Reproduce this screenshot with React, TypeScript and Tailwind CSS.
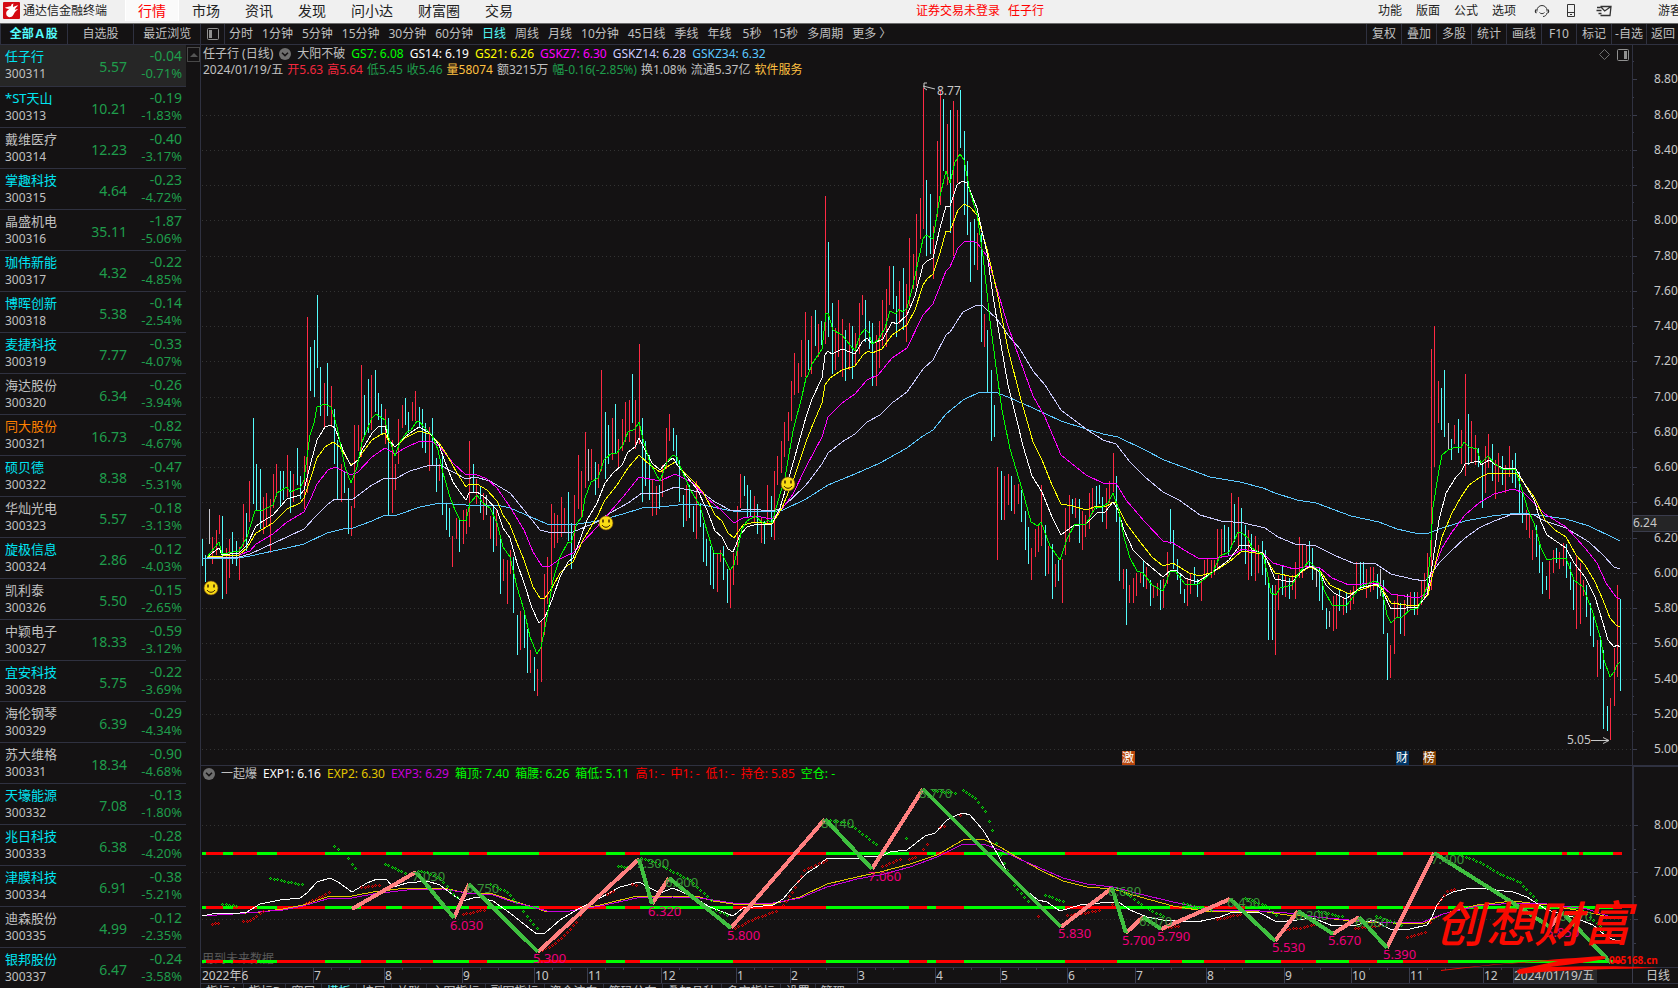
import React from 'react'
import { clsx } from 'clsx'

interface Stock {
  name: string
  code: string
  price: string
  change: string
  percent: string
  tone?: 'plain' | 'orange'
}

const stocks: Stock[] = [
  { name: '任子行', code: '300311', price: '5.57', change: '-0.04', percent: '-0.71%' },
  { name: '*ST天山', code: '300313', price: '10.21', change: '-0.19', percent: '-1.83%' },
  { name: '戴维医疗', code: '300314', price: '12.23', change: '-0.40', percent: '-3.17%', tone: 'plain' },
  { name: '掌趣科技', code: '300315', price: '4.64', change: '-0.23', percent: '-4.72%' },
  { name: '晶盛机电', code: '300316', price: '35.11', change: '-1.87', percent: '-5.06%', tone: 'plain' },
  { name: '珈伟新能', code: '300317', price: '4.32', change: '-0.22', percent: '-4.85%' },
  { name: '博晖创新', code: '300318', price: '5.38', change: '-0.14', percent: '-2.54%' },
  { name: '麦捷科技', code: '300319', price: '7.77', change: '-0.33', percent: '-4.07%' },
  { name: '海达股份', code: '300320', price: '6.34', change: '-0.26', percent: '-3.94%', tone: 'plain' },
  { name: '同大股份', code: '300321', price: '16.73', change: '-0.82', percent: '-4.67%', tone: 'orange' },
  { name: '硕贝德', code: '300322', price: '8.38', change: '-0.47', percent: '-5.31%' },
  { name: '华灿光电', code: '300323', price: '5.57', change: '-0.18', percent: '-3.13%', tone: 'plain' },
  { name: '旋极信息', code: '300324', price: '2.86', change: '-0.12', percent: '-4.03%' },
  { name: '凯利泰', code: '300326', price: '5.50', change: '-0.15', percent: '-2.65%', tone: 'plain' },
  { name: '中颖电子', code: '300327', price: '18.33', change: '-0.59', percent: '-3.12%', tone: 'plain' },
  { name: '宜安科技', code: '300328', price: '5.75', change: '-0.22', percent: '-3.69%' },
  { name: '海伦钢琴', code: '300329', price: '6.39', change: '-0.29', percent: '-4.34%', tone: 'plain' },
  { name: '苏大维格', code: '300331', price: '18.34', change: '-0.90', percent: '-4.68%', tone: 'plain' },
  { name: '天壕能源', code: '300332', price: '7.08', change: '-0.13', percent: '-1.80%' },
  { name: '兆日科技', code: '300333', price: '6.38', change: '-0.28', percent: '-4.20%' },
  { name: '津膜科技', code: '300334', price: '6.91', change: '-0.38', percent: '-5.21%' },
  { name: '迪森股份', code: '300335', price: '4.99', change: '-0.12', percent: '-2.35%', tone: 'plain' },
  { name: '银邦股份', code: '300337', price: '6.47', change: '-0.24', percent: '-3.58%' },
]

const menuItems = ['市场', '资讯', '发现', '问小达', '财富圈', '交易']
const systemItems = ['功能', '版面', '公式', '选项']
const periods = [
  '分时', '1分钟', '5分钟', '15分钟', '30分钟', '60分钟', '日线', '周线', '月线',
  '10分钟', '45日线', '季线', '年线', '5秒', '15秒', '多周期', '更多 〉',
]
const tools = ['复权', '叠加', '多股', '统计', '画线', 'F10', '标记', '-自选']
const bottomTabs = ['指标A', '指标B', '窗口', '模板', '扩展', '关联', '主图指标', '副图指标', '资金流向', '筹码分布', '叠加品种', '多空指标', '设置', '管理']

// One entry per bar: colour (c = down, r = up, w = flat), then high and low
const BARS = `
c539-566 c555-582 w509-544 r537-564 r530-555 r515-534 c516-599 r548-594 r539-578 c532-564
c541-566 r547-580 r504-547 c513-551 r481-522 c418-504 c464-511 c469-529 r497-534 r493-527
r499-553 r474-508 r464-497 c471-506 c471-500 r455-497 c471-513 r474-502 c448-485 c476-499
r456-509 r317-493 c347-391 c340-397 c295-368 c367-416 r383-428 c363-416 r386-427 c409-464
c440-499 r464-502 c472-493 c488-534 r506-536 r425-508 r425-451 r365-457 c395-435 c379-433
r375-430 c370-412 c393-420 c404-435 r409-444 c418-515 r440-513 r464-490 r419-464 r405-428
c398-425 c412-433 r402-421 r391-421 c407-427 c409-448 c423-453 r427-471 c418-465 c458-492
r464-481 c453-515 c504-530 c508-537 r536-567 r518-539 c520-552 r510-544 r509-534 r441-527
c464-493 r479-504 c486-513 r493-520 w495-515 r516-539 c506-552 r510-546 c537-594 r559-581
r560-604 r550-574 c557-613 c615-655 r611-650 c611-648 c629-673 r650-673 c657-691 r669-696
r620-682 r574-635 r557-604 r504-585 r513-548 r515-543 r497-537 r508-532 c492-541 c523-569
r495-550 r455-509 r471-518 r432-488 w449-481 r449-480 c462-495 r464-488 r370-471 c412-479
c425-464 r418-460 c404-454 r439-469 r419-451 r402-442 r400-442 c374-423 r400-449 r344-444
c418-502 c441-486 c455-500 r479-516 r486-515 c485-509 r465-497 r428-469 r414-441 c428-451
c435-465 c460-502 c495-527 r485-521 c485-518 c506-532 r481-539 c503-527 c523-562 c539-566
c546-585 c553-589 r554-592 r550-562 c546-580 c569-603 r569-608 r553-585 r506-565 r474-508
c476-496 c485-518 c490-517 r496-523 c504-534 r517-543 c521-544 r485-523 c496-537 r471-540
r456-485 r441-473 r422-457 r412-441 r381-421 r353-395 r363-393 r340-377 r312-377 c340-370
r316-374 c310-346 r324-357 c321-345 r196-344 c242-337 c303-374 r328-370 r300-357 r319-377
c330-381 r323-370 c326-379 r333-366 r303-354 r295-315 c300-342 c321-349 c323-386 r335-386
r321-368 r300-346 r289-347 r266-305 c266-309 c296-337 r281-324 c268-330 r284-342 r238-306
r254-289 r214-286 r198-239 r88-229 c180-256 c194-254 r226-279 r141-217 r90-205 c99-171
r124-185 c110-233 r101-256 r110-183 c90-148 c131-215 c161-235 c222-282 c219-265 r233-270
c233-342 r314-347 c330-392 c370-441 c405-437 r467-560 c471-520 r476-520 r474-505 c476-511
r485-514 r484-504 c490-522 c511-550 c527-564 r548-580 r529-557 r526-552 r485-546 c525-576
r546-574 c544-599 r564-587 c560-581 r559-603 r508-555 r495-542 c499-514 r498-518 c499-543
r511-550 r515-537 r493-529 r488-514 c486-509 c485-504 c497-522 r488-529 r481-503 r453-492
c476-522 c514-581 r569-589 c569-625 r585-603 r578-603 r573-596 r573-583 c560-587 r567-589
c580-606 r585-598 r583-596 c580-610 r579-608 r552-584 c509-544 c530-569 c559-580 c573-594
c589-603 r578-606 r573-594 c567-585 c579-597 r578-601 r560-579 r559-573 r560-578 r560-575
r529-568 r529-557 c525-552 c527-555 r493-545 c504-542 r497-550 c508-552 c525-564 r530-580
c534-576 r536-581 r545-573 c541-575 c550-585 c580-640 c585-640 r585-655 r575-610 c566-595
r575-597 c578-599 r575-590 r562-599 r537-578 r545-578 r545-568 c541-567 c548-580 w567-587
c567-601 c580-610 c608-629 w611-627 r596-631 r595-629 c589-611 r598-615 c593-613 r590-610
r586-604 r562-592 c562-590 c562-587 r569-598 r567-592 r567-590 c574-599 w569-596 c580-634
c633-680 r645-678 r601-654 r595-618 c603-634 r600-636 w594-612 r592-608 c592-615 r592-615
r580-605 r573-600 r553-592 r349-590 r326-467 r381-423 c388-430 c370-437 w423-450 c439-460
r425-444 c419-453 r430-464 r374-476 c414-465 r421-462 r435-465 c448-467 c463-508 r446-493
r434-468 c444-481 r460-499 r453-482 c456-485 r465-493 r446-477 c460-483 c453-488 c472-513
c493-523 r510-530 r513-538 r530-560 c525-557 c544-573 c562-594 c576-590 r561-599 r550-573
c548-563 r552-569 r543-566 c544-578 c562-590 c580-610 r555-629 r563-624 r580-596 c585-617
c603-636 c615-647 r640-677 c636-669 c650-729 c706-731 r698-740 r648-706 r585-677 c599-691
`
  .trim()
  .split(/\s+/)

const BAR_COLOR: Record<string, string> = { c: '#54fcfc', r: '#ff2a44', w: '#c8c8d0' }

// Moving averages, drawn from the slowest to the fastest
const averages = [
  {
    color: '#5cc8ff',
    points: '202,559 239,558 250,556 287,548 304,544 327,533 343,529 353,528 372,521 385,515 397,515 420,507 440,503 466,505 497,505 510,508 524,514 547,524 578,524 597,521 623,514 642,508 660,507 687,504 703,505 732,511 772,512 783,510 806,499 828,485 855,474 880,463 907,448 923,436 933,430 946,414 963,400 980,392 995,392 1008,397 1033,408 1061,421 1086,429 1103,434 1118,437 1145,450 1164,460 1210,477 1240,482 1263,488 1275,493 1297,500 1316,503 1351,516 1379,522 1397,529 1419,534 1429,533 1442,528 1465,521 1492,516 1519,513 1538,515 1566,519 1589,526 1614,538 1620,541',
  },
  {
    color: '#ccccff',
    points: '207,557 239,557 250,554 263,548 287,537 304,529 315,517 327,505 335,499 353,499 372,485 385,478 395,479 410,471 430,465 440,465 453,472 466,479 475,477 490,481 510,493 524,510 540,530 548,532 573,532 597,522 610,513 628,503 642,493 660,493 675,487 703,493 715,502 732,511 750,509 772,511 782,508 806,485 822,464 828,453 842,442 855,434 867,422 880,415 892,403 907,392 923,369 933,360 946,335 950,332 963,312 977,305 983,306 997,319 1008,335 1020,349 1033,371 1045,385 1061,410 1086,429 1103,440 1116,444 1130,462 1145,477 1163,492 1179,500 1200,515 1221,521 1244,523 1265,528 1278,537 1295,544 1316,546 1336,556 1353,563 1376,564 1391,574 1412,579 1425,581 1429,577 1439,563 1450,552 1465,538 1479,528 1494,521 1513,514 1532,514 1545,521 1566,528 1589,542 1603,555 1614,567 1620,569',
  },
  {
    color: '#ff00ff',
    points: '207,557 239,555 250,551 256,544 273,534 287,522 304,512 311,498 317,484 328,470 335,467 351,475 358,472 372,457 385,448 395,454 405,448 420,441 432,442 439,446 453,463 466,475 475,474 487,479 497,488 510,507 524,530 533,552 542,566 550,566 560,559 568,555 573,553 583,542 597,527 610,512 623,497 639,477 660,481 675,474 693,483 707,498 722,511 734,523 743,518 755,516 772,519 782,509 793,494 806,467 822,437 828,417 842,403 855,394 867,380 878,375 892,358 907,348 923,315 933,304 946,271 950,267 958,248 965,241 973,241 977,243 987,256 997,289 1008,326 1020,360 1033,396 1045,417 1061,455 1086,475 1103,483 1116,483 1126,500 1145,522 1163,541 1173,543 1189,553 1200,559 1217,558 1233,555 1242,549 1263,553 1273,563 1294,569 1309,566 1320,568 1332,578 1349,585 1376,583 1381,585 1391,594 1418,598 1428,593 1433,572 1442,548 1452,532 1465,515 1479,503 1494,494 1513,489 1524,493 1545,514 1566,527 1585,548 1597,563 1606,583 1616,597 1620,599',
  },
  {
    color: '#ffff00',
    points: '207,557 239,555 247,548 256,533 273,523 287,509 300,503 304,498 311,477 317,458 325,447 333,442 340,447 351,465 358,460 362,453 372,440 380,435 385,433 389,442 395,447 405,438 419,431 430,434 439,443 447,455 457,473 466,487 469,484 477,484 487,490 497,501 503,515 510,525 517,543 524,560 533,587 540,598 545,598 552,588 560,573 568,565 573,562 583,540 597,517 605,500 617,485 628,468 639,455 650,465 660,472 667,467 675,462 679,467 693,481 703,492 715,515 722,521 728,533 734,538 743,525 755,522 772,524 782,508 793,481 806,442 813,424 822,403 825,385 830,378 842,370 855,366 863,355 868,351 872,353 882,349 892,335 907,325 915,310 923,285 927,279 933,274 940,253 946,231 950,231 958,210 964,204 970,207 977,215 987,249 997,292 1008,349 1020,396 1033,442 1042,460 1052,485 1061,504 1073,506 1086,510 1097,506 1107,506 1113,502 1116,503 1126,523 1137,538 1152,557 1163,566 1173,563 1189,573 1200,576 1213,572 1229,562 1242,551 1263,554 1275,573 1294,577 1309,567 1320,571 1330,585 1349,594 1374,585 1381,587 1391,603 1406,605 1418,605 1428,595 1433,573 1442,537 1452,513 1461,497 1469,485 1479,478 1489,473 1503,474 1516,473 1524,483 1534,497 1545,520 1555,530 1566,537 1576,555 1585,565 1595,582 1603,600 1610,618 1616,625 1620,627',
  },
  {
    color: '#ffffff',
    points: '207,557 219,548 222,555 239,553 247,545 256,526 263,521 273,515 287,499 300,495 304,490 311,462 317,440 325,427 331,425 335,428 343,450 351,466 358,460 362,450 372,433 379,426 385,426 389,440 395,447 405,437 413,431 419,427 430,433 439,445 445,462 453,482 462,495 466,500 469,493 477,492 487,499 497,510 503,528 510,538 517,563 524,583 532,608 539,623 545,617 552,600 560,577 568,562 573,558 580,540 587,520 597,503 605,483 613,473 622,465 628,452 635,447 639,438 645,450 652,463 660,470 667,462 673,458 678,466 697,489 707,510 715,531 722,537 728,549 733,552 740,535 747,527 757,524 772,524 780,508 788,481 797,449 806,417 812,399 822,378 825,355 828,351 832,354 842,349 855,354 862,342 867,338 872,344 883,339 892,322 897,324 907,315 915,296 923,265 927,261 933,258 940,228 946,206 950,206 957,185 962,181 967,183 977,208 987,253 993,296 1000,339 1008,385 1017,421 1023,446 1032,476 1042,492 1052,517 1061,535 1073,526 1086,524 1097,513 1105,512 1113,502 1118,510 1124,530 1133,550 1145,562 1163,577 1171,570 1177,571 1185,578 1197,582 1213,572 1229,560 1240,545 1249,545 1252,550 1263,553 1267,560 1275,579 1292,582 1303,570 1311,566 1320,572 1326,585 1334,593 1346,599 1360,588 1377,584 1383,592 1391,609 1406,608 1418,607 1427,595 1433,560 1439,520 1446,493 1456,477 1461,472 1465,464 1479,461 1481,465 1489,460 1496,465 1503,468 1516,469 1524,483 1534,500 1541,522 1547,535 1566,548 1574,563 1585,577 1595,597 1603,623 1608,640 1614,647 1617,645 1620,647',
  },
  {
    color: '#00ff00',
    points: '207,557 219,542 222,554 239,551 247,537 255,511 263,510 273,505 277,493 287,487 290,492 300,488 304,480 310,435 314,423 317,407 325,404 331,407 337,427 345,467 351,483 357,467 362,442 372,418 376,414 385,420 389,438 395,456 400,442 407,432 411,430 417,421 419,421 424,427 432,435 438,450 443,473 450,497 455,510 460,520 466,521 470,503 477,495 483,503 490,508 497,523 503,547 510,557 517,587 524,610 530,637 537,654 541,647 547,617 553,580 560,557 568,542 571,543 577,523 582,517 585,498 591,482 598,478 604,460 612,453 617,453 623,445 628,432 635,429 639,422 644,443 650,463 660,481 667,462 673,455 677,457 679,464 690,489 700,506 707,531 714,553 722,554 730,570 734,565 742,529 747,521 755,516 764,524 768,520 772,523 778,501 785,478 793,431 802,396 806,378 808,375 812,364 822,349 826,313 828,313 833,330 842,335 855,351 860,335 865,329 869,333 872,344 878,340 885,328 890,311 896,314 899,309 903,312 907,308 913,285 923,239 926,235 933,239 940,196 946,171 950,183 955,162 960,154 964,160 970,192 977,214 983,256 990,321 997,374 1002,410 1010,449 1022,489 1031,522 1038,526 1041,522 1050,546 1060,560 1067,539 1075,524 1086,524 1095,508 1102,507 1108,503 1113,493 1118,507 1124,537 1130,558 1137,571 1143,573 1152,585 1163,591 1170,572 1175,571 1185,584 1197,585 1213,572 1220,556 1229,552 1238,532 1242,533 1248,538 1252,548 1263,555 1267,572 1271,593 1276,595 1280,588 1292,585 1299,573 1309,561 1315,567 1320,572 1324,590 1332,605 1347,605 1360,587 1374,581 1379,583 1384,600 1387,615 1391,623 1397,617 1402,617 1410,610 1418,608 1423,597 1427,587 1430,557 1433,507 1439,470 1442,455 1448,450 1456,447 1461,448 1464,442 1469,447 1477,449 1481,463 1488,456 1494,463 1503,470 1515,469 1522,490 1528,510 1534,523 1541,548 1547,560 1557,558 1566,558 1574,580 1583,587 1593,613 1601,640 1604,660 1610,677 1614,672 1617,665 1620,662',
  },
]

const exps = [
  {
    color: '#e0c400',
    points: '202,916 233,914 260,912 283,909 303,905 327,897 352,896 373,892 407,888 443,888 467,893 493,894 513,901 533,907 547,912 570,911 600,905 637,896 673,896 700,897 713,901 733,904 773,904 800,897 827,884 857,877 880,872 910,864 937,855 963,840 983,839 1000,847 1017,857 1040,870 1063,881 1087,887 1113,889 1140,897 1173,906 1210,912 1260,911 1287,915 1317,917 1360,922 1393,923 1423,924 1443,914 1477,905 1513,901 1547,905 1587,912 1617,919',
  },
  {
    color: '#c800dc',
    points: '202,916 233,914 283,910 303,906 327,899 352,898 373,894 407,890 443,889 467,893 493,895 513,902 533,907 547,911 570,911 600,906 637,898 673,897 700,898 733,903 773,903 800,898 827,887 857,879 880,875 910,867 937,857 963,844 983,844 1000,850 1017,858 1040,868 1063,878 1087,884 1113,887 1140,894 1173,902 1210,910 1260,911 1287,913 1317,917 1360,921 1393,923 1423,922 1443,914 1477,906 1513,903 1547,904 1587,909 1617,919',
  },
  {
    color: '#ffffff',
    points: '202,916 217,913 233,914 247,912 260,904 280,900 300,898 307,893 317,882 330,878 338,882 352,892 367,883 377,879 387,880 393,887 407,883 427,881 440,885 453,895 462,901 477,897 493,901 510,913 525,925 537,934 545,933 560,920 580,908 600,898 620,887 639,882 650,888 660,893 673,888 693,897 710,907 723,912 733,916 743,908 773,905 783,899 793,887 807,873 818,866 827,858 857,859 867,856 880,857 890,852 907,850 925,836 935,833 947,820 957,815 963,813 970,815 983,830 997,853 1007,872 1023,888 1038,900 1047,902 1060,911 1080,905 1110,902 1120,903 1130,910 1147,917 1163,920 1197,922 1220,917 1233,912 1260,913 1277,922 1297,920 1313,918 1333,926 1357,925 1373,920 1390,929 1410,929 1427,925 1432,917 1437,905 1443,897 1453,892 1470,888 1487,889 1513,892 1527,897 1547,910 1573,917 1593,925 1607,937 1615,940 1621,941',
  },
]

// Box lines switch between green and red at these x positions, starting green
const boxStops = [
  202, 206, 223, 233, 257, 277, 325, 361, 386, 402, 433, 469, 487, 539, 606, 625, 640, 733, 826, 909, 927, 936, 964,
  1065, 1117, 1170, 1182, 1204, 1245, 1281, 1316, 1349, 1377, 1403, 1448, 1562, 1567, 1579, 1583, 1613, 1622,
]

const rises = [
  '352,909 416,872', '454,918 469,884', '538,952 639,859', '652,904 669,878', '731,928 825,819', '872,869 923,789',
  '1061,927 1112,888', '1126,933 1143,917', '1161,929 1230,899', '1275,941 1298,911', '1333,934 1359,917',
  '1387,948 1434,853', '1550,927 1562,912',
]
const falls = [
  '416,872 454,918', '469,884 538,952', '639,859 652,904', '669,878 731,928', '825,819 872,869', '923,789 1061,927',
  '1112,888 1126,933', '1143,917 1161,929', '1230,899 1275,941', '1298,911 1333,934', '1359,917 1387,948',
  '1434,853 1513,903 1550,927', '1562,912 1611,963',
]

const greenDots = [
  '222,904 240,906', '270,878 305,885', '334,846 342,852', '348,858 352,864 358,872', '385,864 408,874',
  '418,871 427,872 440,878 450,890 460,901', '490,884 507,892 516,902 530,920 540,932', '618,866 630,867',
  '641,858 655,862 670,870 690,880 714,903', '716,910 731,916', '830,820 848,823 880,847', '906,838 907,838',
  '933,790 948,792 958,793', '963,790 975,798 985,811 992,830 1000,855 1014,885 1031,905', '1045,895 1066,902',
  '1117,888 1130,896 1145,907 1167,918', '1183,903 1215,911', '1245,898 1265,905 1279,918', '1318,911 1345,917',
  '1376,916 1404,926', '1455,853 1480,862 1500,874 1520,882 1539,903', '1583,911 1600,926 1610,938',
]
const redDots = [
  '212,924 221,922', '243,921 250,920 266,909', '306,903 322,896 332,890', '361,887 382,884', '463,914 487,909',
  '542,950 555,943 567,932 576,922 584,908', '607,894 616,889', '632,884 640,886', '735,928 755,918 779,910',
  '783,905 792,892 804,870 815,865 830,858', '882,866 903,857', '909,859 918,856', '923,849 931,839',
  '940,827 948,824', '960,815 961,815', '1038,916 1042,914', '1067,915 1085,913 1102,909', '1112,904 1113,904',
  '1165,928 1181,925', '1217,919 1243,913', '1282,929 1300,928 1318,923', '1355,928 1382,925', '1407,937 1428,931',
  '1430,922 1435,919', '1438,903 1447,891 1458,888',
]

const peaks: [number, number, string][] = [
  [413, 877, '7.030'], [467, 889, '6.750'], [637, 864, '7.300'], [666, 883, '6.900'], [822, 824, '8.140'],
  [920, 794, '8.770'], [1109, 892, '6.680'], [1140, 922, '6.070'], [1228, 903, '6.450'], [1296, 916, '6.200'],
  [1356, 923, '6.060'], [1432, 860, '7.400'], [1560, 917, '6.170'],
]
const troughs: [number, number, string][] = [
  [451, 926, '6.030'], [534, 959, '5.300'], [649, 912, '6.320'], [728, 936, '5.800'], [869, 877, '7.060'],
  [1059, 934, '5.830'], [1123, 941, '5.700'], [1158, 937, '5.790'], [1273, 948, '5.530'], [1329, 941, '5.670'],
  [1384, 955, '5.390'], [1547, 933, '5.850'],
]

const months: [number, string][] = [
  [313, '7'], [384, '8'], [462, '9'], [534, '10'], [587, '11'], [661, '12'], [736, '1'], [790, '2'], [857, '3'],
  [935, '4'], [1000, '5'], [1067, '6'], [1135, '7'], [1206, '8'], [1284, '9'], [1351, '10'], [1409, '11'], [1483, '12'],
]

const AXIS_X = 1632
const priceY = (price: number) => Math.round(749 - (price - 5) * 176.2)
const expY = (price: number) => Math.round(825 + (8 - price) * 47)

// Walks each polyline and drops a small ring roughly every bar
function ringsAlong(points: string) {
  const pts = points.split(' ').map((p) => p.split(',').map(Number))
  const rings: [number, number][] = []
  for (let i = 0; i < pts.length - 1; i++) {
    const [x0, y0] = pts[i]
    const [x1, y1] = pts[i + 1]
    const steps = Math.max(1, Math.round((x1 - x0) / 3.4))
    for (let s = 0; s < steps; s++) {
      rings.push([Math.round(x0 + ((x1 - x0) * s) / steps), Math.round(y0 + ((y1 - y0) * s) / steps)])
    }
  }
  return rings
}

function Logo() {
  return (
    <svg viewBox="0 0 17 17" className="h-[17px] w-[17px]" aria-hidden="true">
      <rect width="17" height="17" rx="1" fill="#d40a12" />
      <path d="M10.5 1.5c-1.8.5-2.8 1.300-2.300 2.500L2 5.500C3.500 7 5.500 7 6.500 6.800 4.500 8.500 2.800 9.500 3.200 12c.4 2.600 2.600 3.500 4.600 3 2-.5 2.500-2.400 3.700-4.300.9-1.500 2.500-2.700 3.500-3.200-1.200-.3-2.300-.2-3.200.5.3-1.500 1.700-3.300 3.500-4.500-2 0-3.700.6-5 1.700-.3-1.300-.4-2.300.2-3.700z" fill="#fff" />
    </svg>
  )
}

function ChevronDot() {
  return (
    <svg viewBox="0 0 12 12" className="h-3 w-3 shrink-0" aria-hidden="true">
      <circle cx="6" cy="6" r="6" fill="#6e6e6e" />
      <path d="M3 4.800 6 7.600 9 4.800" fill="none" stroke="#141213" strokeWidth="1.500" />
    </svg>
  )
}

function HeadsetIcon() {
  return (
    <svg viewBox="0 0 16 14" className="h-3.5 w-4" fill="none" stroke="#333" aria-hidden="true">
      <path d="M3 7.500V6.500a5 5 0 0 1 10 0v1" />
      <path d="M2.500 5.500C1 6 1 8.500 2.500 9M13.500 5.500C15 6 15 8.500 13.500 9" strokeWidth="1.300" />
      <path d="M5.500 8.500c1.300 1.600 3.700 1.600 5 0M13 9c-.5 2.300-2 3.500-4 3.500" />
    </svg>
  )
}

function PhoneIcon() {
  return (
    <svg viewBox="0 0 10 14" className="h-3.5 w-2.5" fill="none" stroke="#333" aria-hidden="true">
      <path d="M1.500.5h7v12h-7zM1.500 8.500h7M4 10.500h2" />
    </svg>
  )
}

function MailIcon() {
  return (
    <svg viewBox="0 0 16 12" className="h-3 w-4" fill="none" stroke="#333" aria-hidden="true">
      <path d="M4.500 1.500h10.500l-1 9H4.500M4.500 1.500l4.200 4.500L15 1.500M1 2.500h3.500M.5 5.500h5M2.500 8.500h3" strokeWidth="1.300" />
    </svg>
  )
}

function Smiley({ cx, cy }: { cx: number; cy: number }) {
  return (
    <g>
      <circle cx={cx} cy={cy} r="7" fill="#fadc14" stroke="#7a4a10" strokeWidth="0.6" />
      <path d={`M${cx - 3} ${cy - 3.5}v3M${cx + 3} ${cy - 3.5}v3`} stroke="#3a1e00" strokeWidth="1.500" />
      <path d={`M${cx - 4} ${cy + 2}c2 3 6 3 8 0`} fill="none" stroke="#3a1e00" />
    </g>
  )
}

function TopBar() {
  return (
    <header className="flex h-6 shrink-0 items-center overflow-hidden whitespace-nowrap border-b border-[#6b6b6b] bg-[#f0f0f0] pb-0.5 text-[#222]">
      <div className="flex w-[125px] shrink-0 items-center gap-[3px] pl-[3px] text-xs">
        <Logo />
        <span>通达信金融终端</span>
      </div>
      <nav className="flex h-full items-center gap-[25px] text-sm">
        <button type="button" className="-mr-3 h-full border-x border-white bg-[#fafafa] px-3 text-[#ff0000]">行情</button>
        {menuItems.map((item) => (
          <button key={item} type="button">{item}</button>
        ))}
      </nav>
      <div className="mr-[334px] ml-auto flex gap-2 text-xs text-[#ff0000]">
        <span>证券交易未登录</span>
        <span>任子行</span>
      </div>
      <div className="-mr-1 flex items-center text-xs">
        <div className="flex gap-3.5">
          {systemItems.map((item) => (
            <button key={item} type="button">{item}</button>
          ))}
        </div>
        <button type="button" aria-label="客服" className="ml-[18px]"><HeadsetIcon /></button>
        <button type="button" aria-label="手机" className="ml-4"><PhoneIcon /></button>
        <button type="button" aria-label="邮件" className="ml-5"><MailIcon /></button>
        <button type="button" className="ml-[46px]">游客</button>
      </div>
    </header>
  )
}

function Sidebar() {
  return (
    <aside className="flex w-[201px] shrink-0 flex-col border-r border-[#2f3140]">
      <div className="flex h-[21px] shrink-0 divide-x divide-[#2f3140] border-b border-l border-[#2f3140] text-xs">
        <button type="button" className="flex-1 font-bold text-[#54fcfc]">全部Ａ股</button>
        <button type="button" className="flex-1">自选股</button>
        <button type="button" className="flex-1">最近浏览</button>
      </div>
      <div className="flex">
        <table className="w-[186px] border-collapse">
          <tbody>
            {stocks.map((stock, index) => (
              <tr
                key={stock.code}
                className={clsx('h-[41px] border-b border-[#2f3140]', index === 0 && 'bg-[#262626]')}
              >
                <td className="pt-0.5 pl-[5px] align-top">
                  <div
                    className={clsx(
                      'text-[13px] leading-[18px]',
                      !stock.tone && 'text-[#00e4f2]',
                      stock.tone === 'orange' && 'text-[#ff8000]'
                    )}
                  >
                    {stock.name}
                  </div>
                  <div className="text-xs leading-[17px]">{stock.code}</div>
                </td>
                <td className="pt-1 pr-[3px] text-right text-sm text-[#1f9d4c]">{stock.price}</td>
                <td className="w-[56px] pt-0.5 pr-1 text-right align-top text-[#1f9d4c]">
                  <div className="text-sm leading-[18px]">{stock.change}</div>
                  <div className="text-[13px] leading-[17px]">{stock.percent}</div>
                </td>
              </tr>
            ))}
          </tbody>
        </table>
        <div className="flex-1 pt-0.5 pl-px">
          <button
            type="button"
            aria-label="向上"
            className="flex h-[15px] w-full items-center justify-center border border-[#484848]"
          >
            <svg viewBox="0 0 8 4" className="h-1 w-2"><path d="M4 0 8 4H0z" fill="#555" /></svg>
          </button>
        </div>
      </div>
    </aside>
  )
}

function Toolbar() {
  return (
    <div className="flex h-[21px] shrink-0 items-center overflow-hidden whitespace-nowrap border-b border-[#2f3140] text-xs">
      <button type="button" aria-label="侧栏" className="flex h-full w-6 shrink-0 items-center justify-center border-r border-[#2f3140]">
        <svg viewBox="0 0 12 12" className="h-3 w-3">
          <rect x="0.5" y="0.5" width="11" height="11" rx="1" fill="none" stroke="#909090" />
          <rect x="2" y="2" width="3" height="8" fill="#909090" />
        </svg>
      </button>
      <div className="flex gap-[9px] pl-1">
        {periods.map((period) => (
          <button
            key={period}
            type="button"
            className={clsx(period === '日线' && 'text-[#54fcfc]', period === '5秒' && 'px-0.5')}
          >
            {period}
          </button>
        ))}
      </div>
      <div className="ml-auto flex h-full divide-x divide-[#2f3140] border-l border-[#2f3140]">
        {tools.map((tool) => (
          <button key={tool} type="button" className="w-[35px]">{tool}</button>
        ))}
        <button type="button" className="w-[31px] pl-1 text-left">返回</button>
      </div>
    </div>
  )
}

function MainLegend() {
  return (
    <div className="absolute top-px left-0 pl-0.5 text-xs leading-4 whitespace-nowrap">
      <div className="flex items-center gap-1.5">
        <span>任子行 (日线)</span>
        <ChevronDot />
        <span>大阳不破</span>
        <span className="text-[#00ff00]">GS7: 6.08</span>
        <span className="text-white">GS14: 6.19</span>
        <span className="text-[#ffff00]">GS21: 6.26</span>
        <span className="text-[#ff00ff]">GSKZ7: 6.30</span>
        <span className="text-[#ccccff]">GSKZ14: 6.28</span>
        <span className="text-[#5cc8ff]">GSKZ34: 6.32</span>
      </div>
      <div className="flex gap-1">
        <span>2024/01/19/五</span>
        <span className="text-[#f5283f]">开5.63</span>
        <span className="text-[#f5283f]">高5.64</span>
        <span className="text-[#1f9d4c]">低5.45</span>
        <span className="text-[#1f9d4c]">收5.46</span>
        <span className="text-[#ffc040]">量58074</span>
        <span>额3215万</span>
        <span className="text-[#1f9d4c]">幅-0.16(-2.85%)</span>
        <span>换1.08%</span>
        <span>流通5.37亿</span>
        <span className="text-[#ffc040]">软件服务</span>
      </div>
    </div>
  )
}

function MainChart() {
  const labels = Array.from({ length: 20 }, (_, i) => 8.8 - i * 0.2)
  return (
    <section className="relative">
      <svg viewBox="201 45 1477 720" className="block w-full text-xs" fill="none">
        <g shapeRendering="crispEdges">
          {labels.slice(1).map((price) => (
            <path key={price} d={`M202 ${priceY(price) + 0.5}H${AXIS_X}`} stroke="#333333" strokeDasharray="1 3" />
          ))}
          {labels.map((price) => (
            <path key={price} d={`M${AXIS_X} ${priceY(price) + 0.5}h5M${AXIS_X} ${priceY(price) - 17.5}h2`} stroke="#3a3c4c" />
          ))}
          <path d={`M${AXIS_X + 0.5} 45V765`} stroke="#2f3140" />
          {BARS.map((bar, i) => {
            const [high, low] = bar.slice(1).split('-')
            const x = 202.5 + Math.round(i * 3.385)
            return <path key={i} d={`M${x} ${high}V${low}`} stroke={BAR_COLOR[bar[0]]} />
          })}
          {averages.map((line) => (
            <polyline key={line.color} points={line.points} stroke={line.color} />
          ))}
        </g>
        {labels.map((price) => (
          <text key={price} x="1654" y={priceY(price) + 4} fill="#c8c8c8">{price.toFixed(2)}</text>
        ))}
        <rect x="1632.5" y="515.500" width="48" height="16" fill="#252526" stroke="#3a3c4c" />
        <text x="1633" y="527" fill="#c8c8c8">6.24</text>

        <path d="M935 89 923 86m4-3h-3v5l3 2" stroke="#c8c8c8" />
        <text x="937" y="95" fill="#c8c8c8">8.77</text>
        <path d="M1591 740.500h18m-6-3 6 3-6 3" stroke="#c8c8c8" />
        <text x="1567" y="744" fill="#c8c8c8">5.05</text>

        <Smiley cx={211} cy={588} />
        <Smiley cx={606} cy={523} />
        <Smiley cx={788} cy={484} />

        <rect x="1122" y="751" width="13" height="14" fill="#b8460c" />
        <text x="1122" y="762" fill="#fff">激</text>
        <rect x="1396" y="751" width="13" height="14" fill="#003464" />
        <text x="1396" y="762" fill="#fff">财</text>
        <rect x="1423" y="751" width="13" height="14" fill="#7c3c00" />
        <text x="1423" y="762" fill="#fff">榜</text>

        <path d="M1604.500 49.500 1609.500 54.500 1604.500 59.500 1599.500 54.500z" stroke="#707070" />
        <rect x="1617.500" y="49.500" width="11" height="11" rx="1" stroke="#909090" />
        <rect x="1624" y="51" width="3" height="8" fill="#909090" />
      </svg>
      <MainLegend />
    </section>
  )
}

function Rings({ runs, color }: { runs: string[]; color: string }) {
  return (
    <g fill={color} shapeRendering="crispEdges">
      {runs.flatMap(ringsAlong).map(([x, y], i) => (
        <path key={i} d={`M${x} ${y - 1}h1v1h-1zM${x - 1} ${y}h1v1h-1zM${x + 1} ${y}h1v1h-1zM${x} ${y + 1}h1v1h-1z`} />
      ))}
    </g>
  )
}

function SubChart() {
  return (
    <section className="relative">
      <svg viewBox="201 765 1477 203" className="block w-full text-[13px]" fill="none">
        <text x="202" y="963" fill="#5a5a5a" className="text-xs">用到未来数据</text>
        <g shapeRendering="crispEdges">
          <path d="M201 765.500H1678M1634 766.500H1678M201 967.500H1678M1633.500 765V968M1632.500 765V968" stroke="#2f3140" />
          {[8, 7, 6].map((price) => (
            <path key={price} d={`M202 ${expY(price) + 0.5}H${AXIS_X}`} stroke="#333333" strokeDasharray="1 3" />
          ))}
          {[8, 7, 6].map((price) => (
            <path key={price} d={`M1634 ${expY(price) + 0.5}h4M1634 ${expY(price) + 24.5}h2`} stroke="#3a3c4c" />
          ))}
          {[853, 907, 961].map((y) =>
            boxStops.slice(1).map((stop, i) => (
              <rect
                key={`${y}-${stop}`}
                x={boxStops[i]}
                y={y - 1}
                width={stop - boxStops[i]}
                height="3"
                fill={i % 2 === 0 ? '#00ff00' : '#ff0000'}
              />
            ))
          )}
          {exps.map((line) => (
            <polyline key={line.color} points={line.points} stroke={line.color} />
          ))}
        </g>
        <Rings runs={greenDots} color="#00f000" />
        <Rings runs={redDots} color="#f00000" />
        <g strokeWidth="4" shapeRendering="crispEdges">
          {rises.map((points) => <polyline key={points} points={points} stroke="#ff8080" />)}
          {falls.map((points) => <polyline key={points} points={points} stroke="#40c040" />)}
        </g>
        {peaks.map(([x, y, label]) => (
          <text key={label} x={x - 1} y={y + 4} fill="#3a963a">{label}</text>
        ))}
        {troughs.map(([x, y, label]) => (
          <text key={label} x={x - 1} y={y + 4} fill="#f0007c">{label}</text>
        ))}
        {[8, 7, 6].map((price) => (
          <text key={price} x="1654" y={expY(price) + 4} fill="#c8c8c8" className="text-xs">{price.toFixed(2)}</text>
        ))}
      </svg>
      <div className="absolute top-px left-0 flex items-center gap-1.5 pl-0.5 text-xs leading-4 whitespace-nowrap">
        <ChevronDot />
        <span>一起爆</span>
        <span className="text-white">EXP1: 6.16</span>
        <span className="text-[#e0c400]">EXP2: 6.30</span>
        <span className="text-[#c800dc]">EXP3: 6.29</span>
        <span className="text-[#00ff00]">箱顶: 7.40</span>
        <span className="text-[#00ff00]">箱腰: 6.26</span>
        <span className="text-[#00ff00]">箱低: 5.11</span>
        <span className="text-[#ff0000]">高1: -</span>
        <span className="text-[#ff0000]">中1: -</span>
        <span className="text-[#ff0000]">低1: -</span>
        <span className="text-[#ff0000]">持仓: 5.85</span>
        <span className="text-[#00ff00]">空仓: -</span>
      </div>
    </section>
  )
}

function DateAxis() {
  return (
    <svg viewBox="201 968 1477 15" className="block w-full text-xs" fill="none">
      <rect x="1513" y="968" width="84" height="15" fill="#29292b" />
      <g shapeRendering="crispEdges" stroke="#3a3c4c">
        <path d="M242.500 968v15M1513.500 968v15M1632.500 968v15" />
        {months.map(([x]) => (
          <path key={x} d={`M${x + 0.5} 968v15M${x + 18.5} 968v2M${x + 36.5} 968v2`} />
        ))}
      </g>
      <g fill="#c8c8c8">
        <text x="202" y="980">2022年6</text>
        {months.map(([x, label]) => (
          <text key={x} x={x + 1} y="980">{label}</text>
        ))}
        <text x="1514" y="980">2024/01/19/五</text>
        <text x="1646" y="980">日线</text>
      </g>
    </svg>
  )
}

function Watermark() {
  return (
    <svg viewBox="1432 890 246 88" className="w-[246px]" fill="#fa0a00" aria-hidden="true">
      <text x="1435 1486 1534 1583" y="942 942 942 941" fontSize="48" fontWeight="500" fontStyle="italic">创想财富</text>
      <path d="M1441 970C1490 964 1560 959 1602 956c4 0 5 2 2 3-20 4-40 6-54 8 40-1 80-1 108 1-40 1-90 1-138 6-4-2-4-4 0-5l38-8c-40 1-80 5-117 10z" />
      <text x="1609" y="964" fontSize="10" fontWeight="700">005168.cn</text>
    </svg>
  )
}

export default function App() {
  return (
    <div className="flex h-screen flex-col overflow-hidden bg-[#141213] font-['Noto_Sans','Noto_Sans_CJK_SC',sans-serif] text-[#c0c0c0]">
      <TopBar />
      <div className="flex min-h-0 flex-1">
        <Sidebar />
        <main className="flex min-w-0 flex-1 flex-col">
          <Toolbar />
          <div className="relative">
            <MainChart />
            <SubChart />
            <DateAxis />
            <div className="absolute right-0 bottom-[5px]"><Watermark /></div>
          </div>
          <div className="flex min-h-0 flex-1 divide-x divide-[#2f3140] overflow-hidden border-t border-[#2f3140] text-xs whitespace-nowrap">
            {bottomTabs.map((tab) => (
              <button key={tab} type="button" className={clsx('h-4 px-[5px]', tab === '模板' && 'text-[#54fcfc]')}>
                {tab}
              </button>
            ))}
          </div>
        </main>
      </div>
    </div>
  )
}
